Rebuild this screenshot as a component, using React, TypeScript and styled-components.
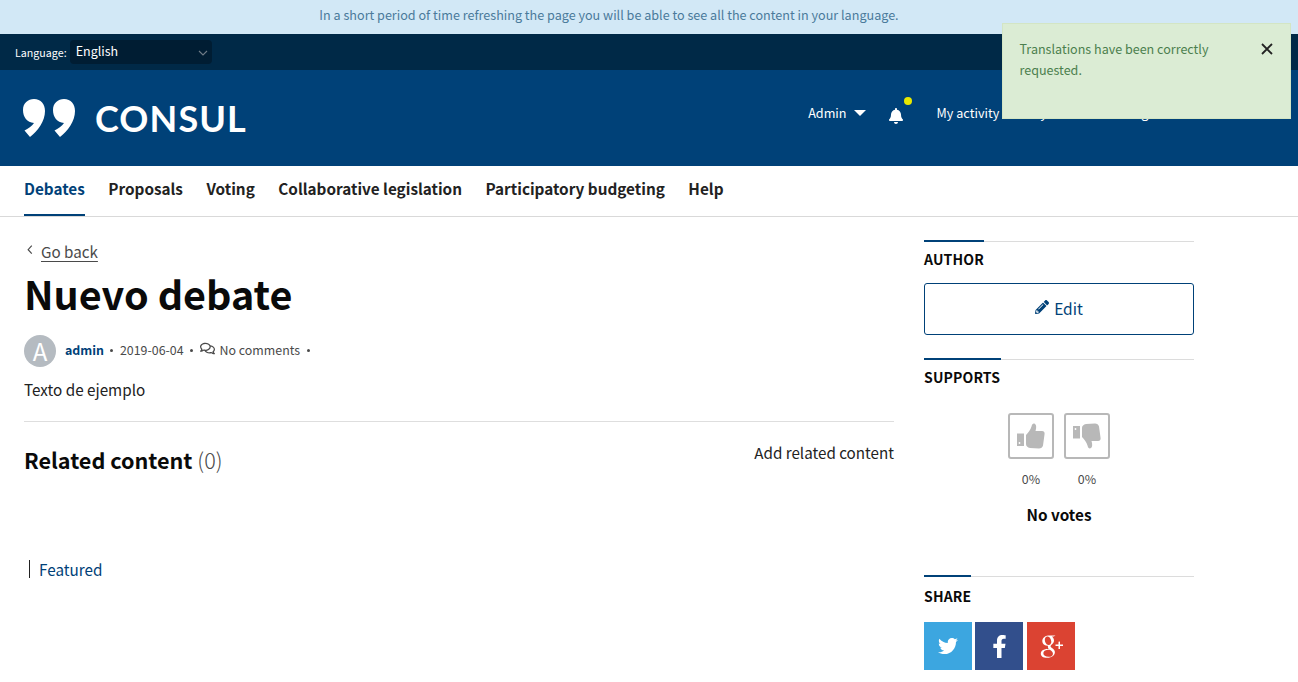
import React from "react";
import styled, { createGlobalStyle } from "styled-components";
import { FaBell, FaPencilAlt, FaRegComments, FaTwitter, FaFacebookF } from "react-icons/fa";
import { TiSocialGooglePlus } from "react-icons/ti";

const Global = createGlobalStyle`
  html, body { margin: 0; padding: 0; background: #fff; height: 682px; overflow: hidden; }
  body { font-family: "Noto Sans CJK SC", "Liberation Sans", sans-serif; color: #222; font-size: 15.25px; }
  * { box-sizing: border-box; }
`;

const Page = styled.div`
  position: relative;
  width: 1298px;
  height: 682px;
  overflow: hidden;
`;
const Banner = styled.div`
  height: 34px;
  background: #d2e8f6;
  color: #4a7a9b;
  font-size: 12.6px;
  line-height: 29px;
  text-align: center;
  padding-right: 80px;
`;
const LangBar = styled.div`
  height: 36px;
  background: #002947;
  display: flex;
  align-items: center;
  padding: 0 0 0 15px;
  gap: 3px;
`;
const LangLabel = styled.span`
  color: #fff;
  font-size: 10.7px;
  line-height: 35px;
`;
const LangSelect = styled.div`
  width: 142px;
  height: 24px;
  background: #001d33;
  border-radius: 4px;
  color: #fff;
  font-size: 12.5px;
  line-height: 20px;
  padding: 0 4px 2px 6px;
  display: flex;
  align-items: center;
  justify-content: space-between;
  svg { margin-top: 3px; }
`;
const Header = styled.header`
  height: 96px;
  background: #004178;
  display: flex;
  align-items: center;
  justify-content: space-between;
  padding: 0 0 0 23px;
`;
const Logo = styled.div`
  display: flex;
  align-items: center;
  gap: 20px;
`;
const LogoText = styled.span`
  color: #fff;
  font-family: "Lato", sans-serif;
  font-weight: 700;
  font-size: 36px;
  line-height: 39px;
  letter-spacing: 1.1px;
`;
const UserMenu = styled.nav`
  display: flex;
  align-items: center;
  margin-right: 119px;
  color: #fff;
  font-size: 12.65px;
  line-height: 20px;
  position: relative;
  top: -5px;
`;
const MenuItem = styled.span<{ $ml?: number }>`
  margin-left: ${p => p.$ml ?? 0}px;
  white-space: nowrap;
`;
const Caret = styled.span`
  width: 0;
  height: 0;
  border-left: 6px solid transparent;
  border-right: 6px solid transparent;
  border-top: 6px solid #fff;
  margin-left: 7px;
`;
const BellWrap = styled.span`
  position: relative;
  margin-left: 22px;
  width: 16px;
  height: 16px;
  display: block;
  top: 3px;
  svg { display: block; }
`;
const BellDot = styled.span`
  position: absolute;
  left: 16px;
  top: -11px;
  width: 8px;
  height: 8px;
  border-radius: 50%;
  background: #e8e800;
`;
const Nav = styled.nav`
  height: 51px;
  border-bottom: 1px solid #d9d9d9;
  display: flex;
  padding-left: 24px;
  gap: 23.5px;
`;
const NavItem = styled.a<{ $active?: boolean }>`
  height: 50px;
  font-weight: 700;
  font-size: 15.3px;
  line-height: 44px;
  color: ${p => (p.$active ? "#004178" : "#222")};
  border-bottom: 2px solid ${p => (p.$active ? "#004178" : "transparent")};
  white-space: nowrap;
`;
const Content = styled.div`
  display: grid;
  grid-template-columns: 870px 270px;
  column-gap: 30px;
  padding: 24px 0 0 24px;
`;
const Main = styled.main``;
const Back = styled.div`
  display: flex;
  align-items: flex-start;
  height: 24px;
  color: #4a4a4a;
  font-size: 15.2px;
  line-height: 20px;
`;
const BackLink = styled.a`
  text-decoration: underline;
  text-underline-offset: 3px;
  margin-left: 6px;
`;
const Title = styled.h1`
  margin: 3px 0 0;
  font-size: 39.5px;
  line-height: 50px;
  font-weight: 700;
  color: #0a0a0a;
`;
const Meta = styled.div`
  display: flex;
  align-items: center;
  margin-top: 17px;
  height: 30px;
  font-size: 12.4px;
  line-height: 28px;
  color: #4a4a4a;
`;
const Avatar = styled.div`
  width: 32px;
  height: 32px;
  margin: 0 9px -2px 0;
  border-radius: 50%;
  background: #b5bbc1;
  color: #fff;
  font-size: 24px;
  line-height: 31px;
  text-align: center;
  font-weight: 400;
`;
const Author = styled.a`
  color: #004178;
  font-weight: 700;
`;
const Dot = styled.span`
  margin: 1px 6.5px 0;
  width: 3px;
  height: 3px;
  border-radius: 50%;
  background: #4a4a4a;
  display: block;
`;
const CommentIcon = styled.span`
  display: inline-flex;
  margin-right: 5px;
  margin-top: -4px;
`;
const Body = styled.p`
  margin: 12px 0 0;
  font-size: 15.25px;
  line-height: 24px;
  color: #222;
`;
const Divider = styled.hr`
  border: 0;
  border-top: 1px solid #dedede;
  margin: 20px 0 0;
`;
const RelatedRow = styled.div`
  display: flex;
  justify-content: space-between;
  align-items: flex-start;
  margin-top: 18px;
`;
const RelatedTitle = styled.h2`
  margin: 0;
  font-size: 21.6px;
  line-height: 40px;
  font-weight: 700;
  color: #0a0a0a;
`;
const RelatedCount = styled.span`
  font-weight: 300;
  color: #4a4a4a;
`;
const AddRelated = styled.a`
  font-size: 15.2px;
  line-height: 24px;
  color: #222;
`;
const Featured = styled.div`
  margin-top: 79px;
  display: flex;
  align-items: center;
  height: 20px;
  color: #004178;
  font-size: 15.25px;
  line-height: 20px;
`;
const FeaturedBar = styled.span`
  width: 1px;
  height: 18px;
  background: #222;
  margin: 0 9px 0 5px;
`;
const Side = styled.aside``;
const SideHead = styled.div<{ $bar: number; $mt?: number; $pt?: number }>`
  position: relative;
  border-top: 1px solid #dcdcdc;
  margin-top: ${p => p.$mt ?? 0}px;
  font-weight: 700;
  font-size: 14px;
  line-height: 20px;
  padding-top: ${p => p.$pt ?? 7}px;
  color: #0a0a0a;
  letter-spacing: 0.15px;
  &::before {
    content: "";
    position: absolute;
    left: 0;
    top: -2px;
    height: 2px;
    width: ${p => p.$bar}px;
    background: #004178;
  }
`;
const EditBtn = styled.a`
  margin-top: 14px;
  height: 52px;
  border: 1px solid #004178;
  border-radius: 3px;
  color: #004178;
  font-size: 15.5px;
  line-height: 48px;
  padding-bottom: 2px;
  display: flex;
  align-items: center;
  justify-content: center;
  gap: 5px;
  svg { margin-top: -3px; }
`;
const Votes = styled.div`
  display: flex;
  justify-content: center;
  gap: 10px;
  margin-top: 26px;
`;
const VoteCol = styled.div`
  width: 46px;
  display: flex;
  flex-direction: column;
  align-items: center;
`;
const VoteBox = styled.div`
  width: 46px;
  height: 46px;
  border: 2px solid #b8b8b8;
  border-radius: 3px;
  display: flex;
  align-items: center;
  justify-content: center;
  color: #b8b8b8;
`;
const Pct = styled.div`
  margin-top: 12px;
  font-size: 12.4px;
  line-height: 16px;
  color: #4a4a4a;
`;
const NoVotes = styled.div`
  margin-top: 17px;
  text-align: center;
  font-weight: 700;
  font-size: 15.3px;
  line-height: 20px;
  color: #0a0a0a;
`;
const ShareRow = styled.div`
  display: flex;
  gap: 3.4px;
  margin-top: 16px;
`;
const ShareBtn = styled.a<{ $bg: string }>`
  width: 48px;
  height: 48px;
  background: ${p => p.$bg};
  color: #fff;
  display: flex;
  align-items: center;
  justify-content: center;
`;
const Toast = styled.div`
  position: absolute;
  left: 1002px;
  top: 23px;
  width: 289px;
  height: 96px;
  background: #dbecd4;
  border: 1px solid #d3e5c4;
  color: #4b7f4e;
  font-size: 12.56px;
  line-height: 21px;
  padding: 14px 60px 0 16.5px;
`;
const ToastClose = styled.svg`
  position: absolute;
  right: 17px;
  top: 19px;
`;

const Quote = "M11 0C18 0 22 5 22 12C22 22 15 32 7 38L1.500 31.500C5 29.500 9 27 11 24C4 23.500 0 18 0 11C0 4 5 0 11 0z";

const Thumb = ({ down }: { down?: boolean }) => (
  <svg width="28" height="26" viewBox="0 0 28 26" fill="currentColor">
    <g transform={down ? "matrix(1 0 0 -1 0 26)" : undefined}>
      <path d="M0 10.500h7v12.500H0z" />
      <circle cx="2.500" cy="20" r="0.900" fill="#fff" />
      <path d="M9 12C11 10 13.500 7 14.500 3.500C15 1 16.500 0 18 1C19.500 2 19.500 5 18.500 8L25 8C27 8 28 9.500 27.500 11.500L26 22.500C25.500 24.500 24 25.500 22 25.500L13 25C10.500 24.500 9 23 9 21z" />
    </g>
  </svg>
);

export default function App() {
  return (
    <Page>
      <Global />
      <Banner>In a short period of time refreshing the page you will be able to see all the content in your language.</Banner>
      <LangBar>
        <LangLabel>Language:</LangLabel>
        <LangSelect>
          English
          <svg width="10" height="6" viewBox="0 0 10 6" fill="none" stroke="#6f7c87" strokeWidth="1.100"><path d="M1 1l4 4 4-4" /></svg>
        </LangSelect>
      </LangBar>
      <Header>
        <Logo>
          <svg width="52" height="38" viewBox="0 0 52 38" fill="#fff">
            <path d={Quote} />
            <path d={Quote} transform="translate(30 0)" />
          </svg>
          <LogoText>CONSUL</LogoText>
        </Logo>
        <UserMenu>
          <MenuItem>Admin</MenuItem>
          <Caret />
          <BellWrap>
            <FaBell size={16} color="#fff" />
            <BellDot />
          </BellWrap>
          <MenuItem $ml={33}>My activity</MenuItem>
          <MenuItem $ml={31}>My account</MenuItem>
          <MenuItem $ml={33}>Sign out</MenuItem>
        </UserMenu>
      </Header>
      <Nav>
        <NavItem $active>Debates</NavItem>
        <NavItem>Proposals</NavItem>
        <NavItem>Voting</NavItem>
        <NavItem>Collaborative legislation</NavItem>
        <NavItem>Participatory budgeting</NavItem>
        <NavItem>Help</NavItem>
      </Nav>
      <Content>
        <Main>
          <Back>
            <svg width="11" height="20" viewBox="0 0 11 22" fill="none" stroke="#4a4a4a" strokeWidth="1.300"><path d="M8 5l-4 4.500 4 4.500" /></svg>
            <BackLink>Go back</BackLink>
          </Back>
          <Title>Nuevo debate</Title>
          <Meta>
            <Avatar>A</Avatar>
            <Author>admin</Author>
            <Dot />
            2019-06-04
            <Dot />
            <CommentIcon><FaRegComments size={15} /></CommentIcon>
            No comments
            <Dot />
          </Meta>
          <Body>Texto de ejemplo</Body>
          <Divider />
          <RelatedRow>
            <RelatedTitle>Related content <RelatedCount>(0)</RelatedCount></RelatedTitle>
            <AddRelated>Add related content</AddRelated>
          </RelatedRow>
          <Featured>
            <FeaturedBar />
            Featured
          </Featured>
        </Main>
        <Side>
          <SideHead $bar={60}>AUTHOR</SideHead>
          <EditBtn><FaPencilAlt size={14} /> Edit</EditBtn>
          <SideHead $bar={77} $mt={24}>SUPPORTS</SideHead>
          <Votes>
            <VoteCol>
              <VoteBox><Thumb /></VoteBox>
              <Pct>0%</Pct>
            </VoteCol>
            <VoteCol>
              <VoteBox><Thumb down /></VoteBox>
              <Pct>0%</Pct>
            </VoteCol>
          </Votes>
          <NoVotes>No votes</NoVotes>
          <SideHead $bar={47} $mt={52} $pt={9}>SHARE</SideHead>
          <ShareRow>
            <ShareBtn $bg="#3ca6e0"><FaTwitter size={20} /></ShareBtn>
            <ShareBtn $bg="#324f8c"><FaFacebookF size={23} /></ShareBtn>
            <ShareBtn $bg="#db4332"><TiSocialGooglePlus size={36} /></ShareBtn>
          </ShareRow>
        </Side>
      </Content>
      <Toast>
        Translations have been correctly requested.
        <ToastClose width="12" height="12" viewBox="0 0 12 12" stroke="#222" strokeWidth="1.800"><path d="M1 1l10 10M11 1L1 11" /></ToastClose>
      </Toast>
    </Page>
  );
}
